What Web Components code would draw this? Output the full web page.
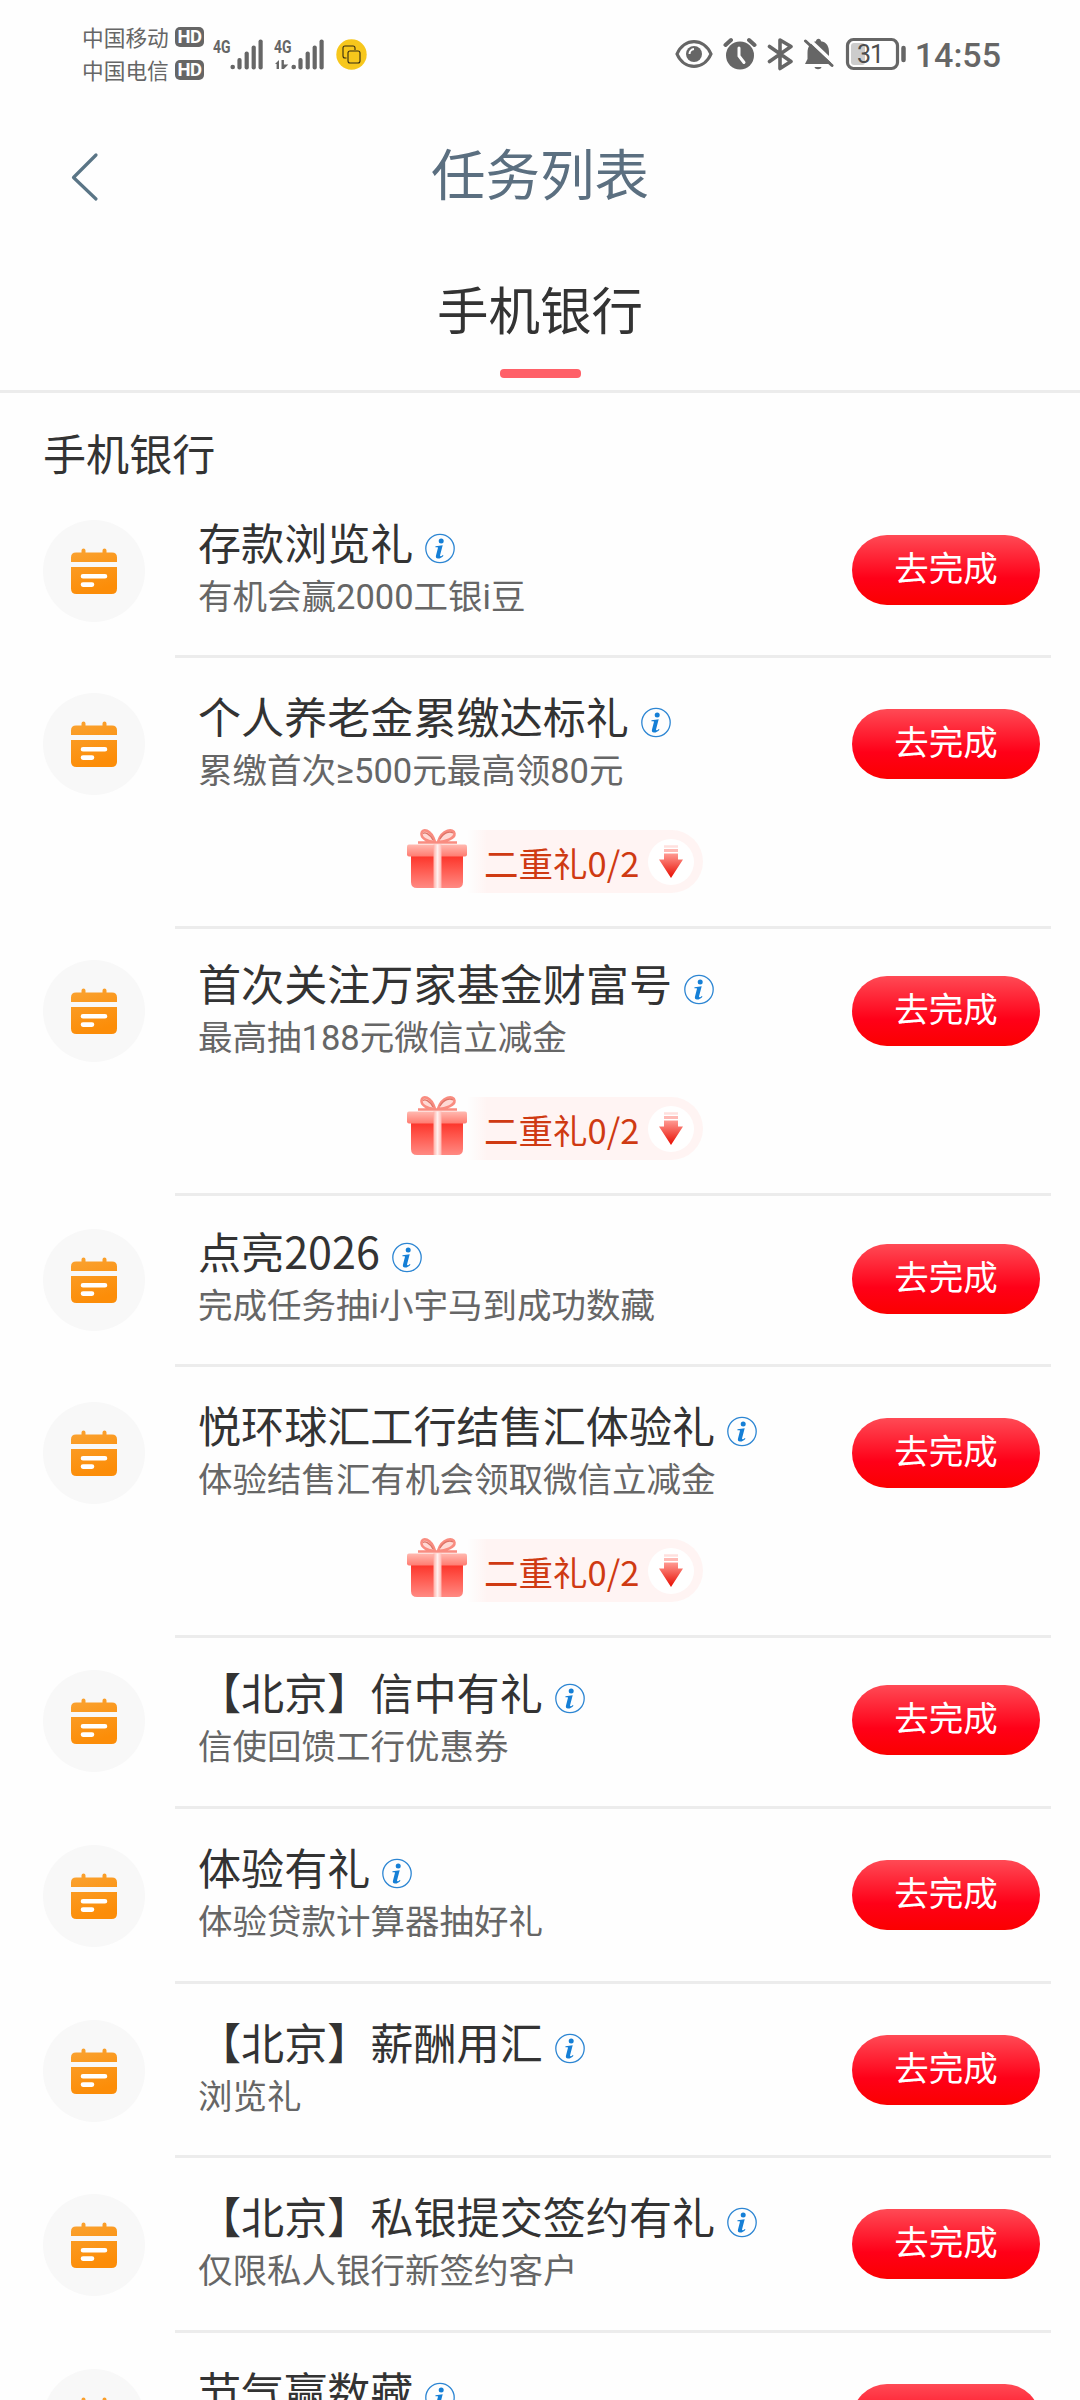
<!DOCTYPE html>
<html lang="zh-CN">
<head>
<meta charset="utf-8">
<title>任务列表</title>
<style>
html,body{margin:0;padding:0}
body{width:1080px;height:2400px;overflow:hidden;background:#fefefe;font-family:Roboto,"Noto Sans CJK SC",sans-serif;color:#333}
</style>
</head>
<body>
<task-page></task-page>
<script>
function define(name, html, setup){
  const t=document.createElement('template');
  t.innerHTML=html;
  customElements.define(name, class extends HTMLElement{
    constructor(){
      super();
      this.attachShadow({mode:'open'}).appendChild(t.content.cloneNode(true));
    }
    connectedCallback(){ if(setup) setup(this,this.shadowRoot); }
  });
}

define('hd-badge',`<style>
:host{display:flex;width:29px;height:20px;border-radius:5px;background:#666;color:#fefefe;align-items:center;justify-content:center;font:700 18.500px/20px Roboto,sans-serif;letter-spacing:-.5px}
</style><span>HD</span>`);

define('signal-bars',`<style>
:host{display:flex;width:52px;height:40px}
svg{display:block}
text{font:700 18px Roboto,sans-serif}
</style>
<svg width="52" height="40" viewBox="0 -6 52 40" fill="#666">
<text x="0" y="15" textLength="17.500" lengthAdjust="spacingAndGlyphs">4G</text>
<g id="data" visibility="hidden"><path d="M1 26l4-4v9h-2.400v-5zM7.500 22h2.400v4.500h4.400l-4.400 4.500h-2.400z"/></g>
<circle cx="19.700" cy="29" r="2.300"/><rect x="24.400" y="20" width="4.200" height="11.500" rx="2"/><rect x="31.600" y="13.500" width="4.200" height="18" rx="2"/><rect x="38.600" y="7.500" width="4.200" height="24" rx="2"/><rect x="45.500" y="1.500" width="4.200" height="30" rx="2"/>
</svg>`,(el,r)=>{ if(el.hasAttribute('data')) r.getElementById('data').setAttribute('visibility','visible'); });

define('status-bar',`<style>
:host{display:flex;justify-content:space-between;height:110px;box-sizing:border-box;padding:20px 79px 0 82px;color:#666}
.left,.right{display:flex;align-items:flex-start}
.carriers{display:flex;flex-direction:column;width:122px}
.c{display:flex;align-items:center;justify-content:space-between;height:33px;font:400 21.700px/33px "Noto Sans CJK SC",sans-serif}
signal-bars{margin:12px 0 0 9px}
.dot{margin:19px 0 0 10px}
svg{display:block}
.right{padding-top:17px}
.time{font:500 34px/36px Roboto,sans-serif;margin-left:8px}
.bt text{font:400 25px Roboto,sans-serif}
</style>
<div class="left">
 <div class="carriers"><div class="c"><span>中国移动</span><hd-badge></hd-badge></div><div class="c"><span>中国电信</span><hd-badge></hd-badge></div></div>
 <signal-bars></signal-bars>
 <signal-bars data></signal-bars>
 <svg class="dot" width="31" height="31" viewBox="0 0 31 31"><circle cx="15.500" cy="15.500" r="15.200" fill="#f7c71c"/><g fill="none" stroke="#332b12" stroke-width="1.100"><path d="M10.500 19h-1.500a2 2 0 0 1-2-2V9a2 2 0 0 1 2-2h8a2 2 0 0 1 2 2v2"/><rect x="12" y="12" width="12" height="12" rx="2"/></g></svg>
</div>
<div class="right">
 <svg width="38" height="32" viewBox="0 0 38 32"><path d="M2 17C9 .500 29 .500 36 17 29 33.500 9 33.500 2 17z" fill="none" stroke="#666" stroke-width="3.200"/><circle cx="19" cy="17" r="8" fill="#666"/><path d="M14.500 17a5 5 0 0 1 4.500-5" fill="none" stroke="#fefefe" stroke-width="2"/></svg>
 <svg style="margin-left:10px" width="34" height="34" viewBox="0 0 34 34"><circle cx="17" cy="18.500" r="14" fill="#666"/><path d="M2.500 8L8 3M31.500 8L26 3" stroke="#666" stroke-width="4" stroke-linecap="round"/><path d="M16 11v8l5 6.500" fill="none" stroke="#fefefe" stroke-width="3" stroke-linecap="round"/></svg>
 <svg style="margin-left:10px" width="27" height="34" viewBox="0 0 27 34"><path d="M2.500 9.500L24 24.500 13 31.500V3L24 9.500 2.500 24.500" fill="none" stroke="#666" stroke-width="3.600" stroke-linejoin="round" stroke-linecap="round"/></svg>
 <svg style="margin-left:9px" width="31" height="34" viewBox="0 0 31 34"><path d="M4.500 22v-6C4.500 9 8 5 13 4.200 13 .800 18 .800 18 4.200 24 5 26 10 26 15v6l2.500 6H2z" fill="#666"/><path d="M11.500 30h7c-.5 3-6.500 3-7 0z" fill="#666"/><path d="M4 .500L32 27" stroke="#fefefe" stroke-width="3.500"/><path d="M2.500 4L29 28.500" stroke="#666" stroke-width="3" stroke-linecap="round"/></svg>
 <svg class="bt" style="margin-left:11px" width="62" height="34" viewBox="0 0 62 34"><rect x="2.500" y="2.500" width="50" height="29" rx="6" fill="none" stroke="#666" stroke-width="3.200"/><rect x="6" y="6" width="14" height="22" rx="3" fill="#ccc"/><text x="12" y="26" fill="#4d4d4d" textLength="27">31</text><path d="M58.500 11v12" stroke="#666" stroke-width="4.500" stroke-linecap="round"/></svg>
 <span class="time">14:55</span>
</div>`);

define('nav-bar',`<style>
:host{display:grid;grid-template-columns:120px 1fr 120px;height:130px;box-sizing:border-box;padding-top:4px;align-items:center;color:#5b6f80}
svg{display:block;margin-left:69px}
h1{margin:-2px 0 0;text-align:center;font-size:54.500px;line-height:80px;font-weight:400}
</style>
<svg width="32" height="52" viewBox="0 0 32 52"><path d="M27 4L4.500 26.500 27 48" fill="none" stroke="#5a7586" stroke-width="3.200" stroke-linecap="round" stroke-linejoin="round"/></svg>
<h1><slot></slot></h1>`);

define('tab-bar',`<style>
:host{display:flex;flex-direction:column;align-items:center;height:153px;box-sizing:border-box;border-bottom:3px solid #ececec}
.t{font-size:51.500px;line-height:76px;margin-top:35px;color:#333}
.u{width:81px;height:9px;border-radius:4px;background:#ff6068;margin-top:18px}
</style><div class="t"><slot></slot></div><div class="u"></div>`);

define('info-icon',`<style>:host{display:block;width:30px;height:31px}svg{display:block}</style>
<svg width="30" height="31" viewBox="0 0 30 31"><circle cx="15" cy="15.500" r="14.200" fill="none" stroke="#2d86d3" stroke-width="1.300"/><circle cx="16.200" cy="8" r="2.500" fill="#157fd6"/><path d="M10.500 13.200C13 12.800 15.500 12.500 17.700 12.300L15 22.600C15 23.700 16.600 23.300 17.800 22L18.500 22.800C16.800 24.800 14.800 25.700 13 25.600 11.200 25.500 10.500 24.300 11 22.500L13 14.800C13.200 14.200 12 14.100 10.400 14.200z" fill="#157fd6"/></svg>`);

define('task-badge',`<style>
:host{display:flex;width:102px;height:102px;border-radius:50%;background:#f8f8f8;align-items:center;justify-content:center}
svg{display:block}
</style>
<svg width="46" height="47" viewBox="0 0 46 47"><defs><linearGradient id="g" x1="0" y1="0" x2=".3" y2="1"><stop offset="0" stop-color="#faa332"/><stop offset="1" stop-color="#fc8d08"/></linearGradient></defs>
<path d="M0 14V9.500Q0 4.500 5 4.500H10.500V2.500Q10.500 .500 12.500 .500T14.500 2.500V4.500H31.500V2.500Q31.500 .500 33.500 .500T35.500 2.500V4.500H41Q46 4.500 46 9.500V14zM0 19H46V40.500Q46 46 40.500 46H5.500Q0 46 0 40.500z" fill="url(#g)"/><path d="M12 28.300H34M12 36.600H21" stroke="#fff" stroke-width="4.600" stroke-linecap="round"/></svg>`);

define('go-button',`<style>
:host{display:block}
button{display:block;width:188px;height:70px;border:0;border-radius:35px;padding:0 0 3px;background:linear-gradient(#ff4a55,#ff0018 62%,#fb0000);color:#fff;font:400 34.500px/66px Roboto,"Noto Sans CJK SC",sans-serif;text-align:center}
</style><button><slot>去完成</slot></button>`);

define('gift-icon',`<style>:host{display:block;width:60px;height:62px}svg{display:block}</style>
<svg width="60" height="62" viewBox="0 0 60 62"><defs>
<linearGradient id="b" x1="0" y1="0" x2="0" y2="1"><stop offset="0" stop-color="#fb2a20"/><stop offset=".5" stop-color="#ff5a50"/><stop offset="1" stop-color="#ff8a83"/></linearGradient>
<linearGradient id="l" x1="0" y1="0" x2="0" y2="1"><stop offset="0" stop-color="#ffb9b0"/><stop offset="1" stop-color="#ff7b70"/></linearGradient>
<linearGradient id="r" x1="0" y1="0" x2="1" y2="0"><stop offset="0" stop-color="#ffb0a8"/><stop offset=".5" stop-color="#fff0ee"/><stop offset="1" stop-color="#ffb9b4"/></linearGradient></defs>
<path d="M11 14.500H50M28 14C20 14 14 10 14.500 5.500 15 0 24 1 28 14zM31 14C35 1 47 0 47.500 5.500 48 10 39 14 31 14z" fill="#ffd9d4" stroke="#f98c80" stroke-width="2.600"/>
<path d="M26 12C23 6 18 4 16 5.500M33 11C37 4 43 3 46 5" stroke="#dd7467" stroke-width="1.300" fill="none"/>
<path d="M4 24H56V54Q56 60 50 60H10Q4 60 4 54z" fill="url(#b)"/><rect x="0" y="16.500" width="60" height="12" rx="2" fill="url(#l)"/><rect x="26.500" y="16.500" width="8" height="43.500" fill="url(#r)"/></svg>`);

define('bonus-pill',`<style>
:host{display:flex;width:296px;height:64px;font:400 34.500px/62px "Noto Sans CJK SC",sans-serif;color:#cf3a12}
gift-icon{margin-top:-2px}
.p{display:flex;align-items:center;justify-content:space-between;flex:1;height:63px;box-sizing:border-box;padding:0 8px 0 17px;border-radius:0 32px 32px 0;background:linear-gradient(90deg,#fff5f400,#fff4f3 20px)}
.p span{padding-top:1px}
svg{display:block}
</style><gift-icon></gift-icon><div class="p"><span><slot></slot></span>
<svg width="47" height="46" viewBox="0 0 47 46"><defs><linearGradient id="a" x1="0" y1="0" x2="0" y2="1"><stop offset="0" stop-color="#ff9a92"/><stop offset="1" stop-color="#e80c00"/></linearGradient></defs><circle cx="23" cy="23" r="23" fill="#fff"/><path d="M16 7.500H30" stroke="#ffe0de" stroke-width="2.500"/><path d="M16 11.500H30" stroke="#ffbab5" stroke-width="3"/><path d="M16 14.500H30V20.500H35L23 39 11 20.500H16z" fill="url(#a)"/></svg></div>`);

define('task-item',`<style>
:host{display:flex;box-sizing:border-box;padding-left:43px;padding-right:29px}
.side{width:132px;flex:none;padding-top:var(--pad)}
:host([bonus]) task-badge{margin-top:-1px}
.main{flex:1;box-sizing:border-box;border-bottom:3px solid #ececec;padding:var(--pad) 11px 0 23px}
.top{display:flex;justify-content:space-between;align-items:flex-start}
.t{display:flex;font-family:"Noto Sans CJK SC",sans-serif;font-size:43.100px;line-height:60px;height:61px;color:#333;margin-top:-9px;white-space:nowrap}
info-icon{margin:22px 0 0 12px}
.s{font-size:34.500px;line-height:50px;color:#666;white-space:nowrap}
go-button{margin-top:15px}
bonus-pill{margin:34px 0 0 209px}
</style>
<div class="side"><task-badge></task-badge></div>
<div class="main"><div class="top"><div><div class="t"><slot></slot><info-icon></info-icon></div><div class="s"></div></div><go-button></go-button></div></div>`,
(el,r)=>{
  el.style.height=el.getAttribute('height')+'px';
  el.style.setProperty('--pad',el.getAttribute('pad')+'px');
  r.querySelector('.s').textContent=el.getAttribute('note')||'';
  if(el.hasAttribute('bonus')&&!r.querySelector('bonus-pill')){
    const p=document.createElement('bonus-pill');
    p.textContent=el.getAttribute('bonus');
    r.querySelector('.main').appendChild(p);
  }
});

define('task-page',`<style>
:host{display:flex;flex-direction:column;width:1080px;height:2400px;overflow:hidden}
h2{box-sizing:border-box;margin:0;height:126px;flex:none;padding:32px 0 0 43px;font-size:43.100px;line-height:64px;font-weight:400;color:#333}
status-bar,nav-bar,tab-bar,task-item{flex:none}
.list{display:flex;flex-direction:column}
</style>
<status-bar></status-bar>
<nav-bar>任务列表</nav-bar>
<tab-bar>手机银行</tab-bar>
<h2>手机银行</h2>
<div class="list">
<task-item pad="1" height="139" note="有机会赢2000工银i豆">存款浏览礼</task-item>
<task-item pad="36" height="271" note="累缴首次≥500元最高领80元" bonus="二重礼0/2">个人养老金累缴达标礼</task-item>
<task-item pad="32" height="267" note="最高抽188元微信立减金" bonus="二重礼0/2">首次关注万家基金财富号</task-item>
<task-item pad="33" height="171" note="完成任务抽i小宇马到成功数藏">点亮2026</task-item>
<task-item pad="36" height="271" note="体验结售汇有机会领取微信立减金" bonus="二重礼0/2">悦环球汇工行结售汇体验礼</task-item>
<task-item pad="32" height="171" note="信使回馈工行优惠券">【北京】信中有礼</task-item>
<task-item pad="36" height="175" note="体验贷款计算器抽好礼">体验有礼</task-item>
<task-item pad="36" height="174" note="浏览礼">【北京】薪酬用汇</task-item>
<task-item pad="36" height="175" note="仅限私人银行新签约客户">【北京】私银提交签约有礼</task-item>
<task-item pad="36" height="175" note="">节气赢数藏</task-item>
</div>`);
</script>
</body>
</html>
